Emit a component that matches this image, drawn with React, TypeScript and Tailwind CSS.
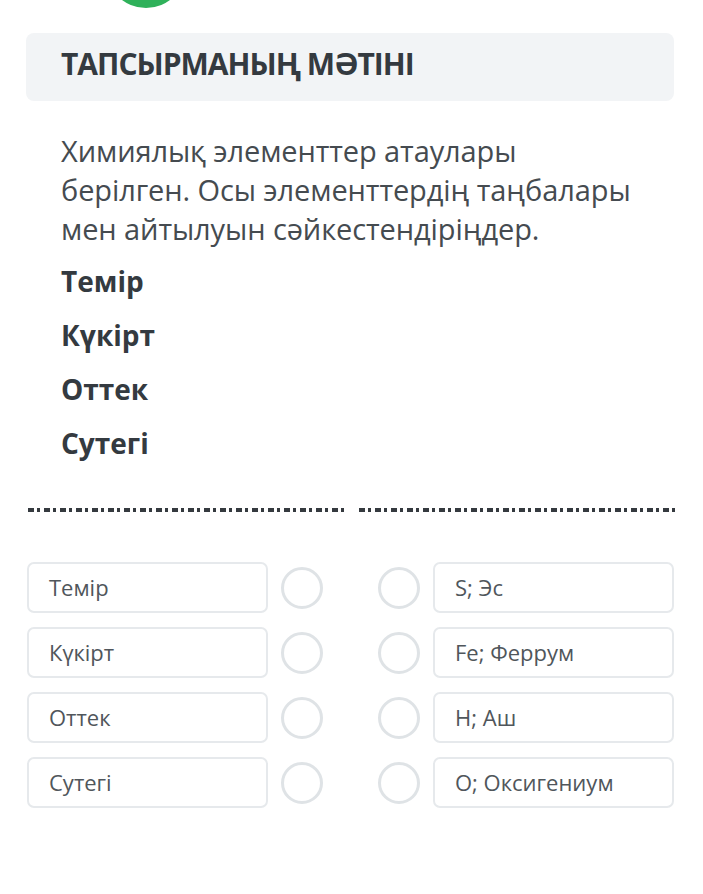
import React from "react";

const left = ["Темір", "Күкірт", "Оттек", "Сутегі"];
const right = ["S; Эс", "Fe; Феррум", "H; Аш", "O; Оксигениум"];

function Dashes() {
  return (
    <div className="flex-1 h-[4px] bg-[repeating-linear-gradient(90deg,#353a3f_0px,#353a3f_6px,transparent_6px,transparent_9px,#353a3f_9px,#353a3f_12px,transparent_12px,transparent_16px)]" />
  );
}

export default function App() {
  return (
    <div className="relative w-[703px] h-[894px] bg-white overflow-hidden font-['Open_Sans',sans-serif]">
      <div className="absolute left-[106px] top-[-72px] w-[80px] h-[80px] rounded-full bg-[#2fb15a]" />
      <div className="pt-[33px] pl-[26px] pr-[29px]">
        <div className="h-[68px] rounded-[8px] bg-[#f2f4f6] flex items-center px-[35px]">
          <span className="text-[30px] leading-[36px] font-bold text-[#343a40] tracking-[-1px] mt-[-6px]">ТАПСЫРМАНЫҢ МӘТІНІ</span>
        </div>
      </div>
      <div className="px-[61px] pt-[30px]">
        <p className="text-[29px] leading-[39px] text-[#454b50] tracking-[-0.1px] whitespace-nowrap">
          Химиялық элементтер атаулары
          <br />
          берілген. Осы элементтердің таңбалары
          <br />
          мен айтылуын сәйкестендіріңдер.
        </p>
        <div className="mt-[14px] flex flex-col gap-[15px]">
          {left.map((t) => (
            <div key={t} className="text-[28px] leading-[39px] font-bold text-[#343a40]">{t}</div>
          ))}
        </div>
      </div>
      <div className="px-[28px] mt-[45px] flex items-center gap-[14px]">
        <Dashes />
        <Dashes />
      </div>
      <div className="px-[27px] mt-[50px] flex flex-col gap-[14px]">
        {left.map((t, i) => (
          <div key={t} className="flex items-center">
            <div className="w-[241px] h-[51px] rounded-[7px] border-2 border-[#e6e9ec] flex items-center px-[20px] text-[22px] text-[#50565b]">{t}</div>
            <div className="ml-[13px] w-[42px] h-[42px] rounded-full border-[3px] border-[#dfe3e6]" />
            <div className="ml-[55px] w-[42px] h-[42px] rounded-full border-[3px] border-[#dfe3e6]" />
            <div className="ml-[13px] w-[241px] h-[51px] rounded-[7px] border-2 border-[#e6e9ec] flex items-center px-[20px] text-[22px] text-[#50565b]">{right[i]}</div>
          </div>
        ))}
      </div>
    </div>
  );
}
